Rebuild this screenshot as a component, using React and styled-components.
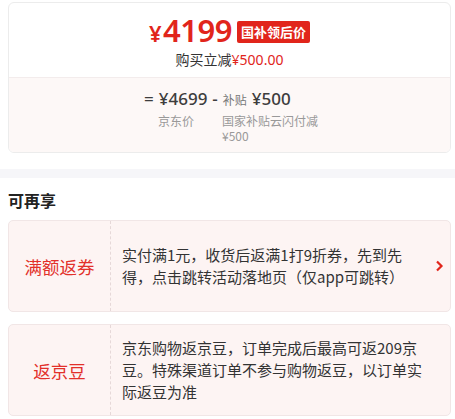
import React from "react";
import styled, { createGlobalStyle } from "styled-components";

const GlobalStyle = createGlobalStyle`
  body {
    margin: 0;
    background: #fff;
    font-family: "Noto Sans CJK SC", "Noto Sans", sans-serif;
    color: #333;
  }
`;

const Page = styled.div`
  padding: 2px 4px 0 8px;
`;

const PriceCard = styled.div`
  border: 1px solid #ececec;
  border-radius: 6px;
  overflow: hidden;
`;

const PriceTop = styled.div`
  display: flex;
  flex-direction: column;
  align-items: center;
  padding: 10px 0 7px;
  border-bottom: 1px solid #f3ecec;
`;

const PriceRow = styled.div`
  display: flex;
  align-items: center;
  gap: 5px;
  height: 36px;
  color: #e1251b;
`;

const BigPrice = styled.span`
  font-family: "Noto Sans", sans-serif;
  font-size: 31px;
  font-weight: 600;
  letter-spacing: -0.5px;
  line-height: 36px;
  span {
    font-size: 22px;
    margin-right: 2px;
  }
`;

const Badge = styled.span`
  background: #e1251b;
  color: #fff;
  font-size: 13px;
  font-weight: 700;
  padding: 1px 4px;
  border-radius: 2px;
  line-height: 20px;
  margin-top: 2px;
`;

const Reduce = styled.div`
  font-size: 14px;
  color: #333;
  line-height: 20px;
  em {
    font-style: normal;
    color: #e1251b;
    font-family: "Noto Sans", sans-serif;
  }
`;

const PriceBottom = styled.div`
  background: #fdf8f7;
  display: grid;
  grid-template-columns: 64px 104px;
  padding: 9px 0 9px 149px;
`;

const Formula = styled.div`
  grid-column: 1 / 3;
  display: flex;
  align-items: baseline;
  gap: 5px;
  font-family: "Noto Sans", sans-serif;
  font-size: 17px;
  font-weight: 500;
  color: #3d3d3d;
  line-height: 24px;
  margin-left: -14px;
  white-space: nowrap;
  small {
    font-family: "Noto Sans CJK SC", sans-serif;
    font-size: 12px;
    font-weight: 400;
    color: #777;
  }
`;

const Label = styled.div`
  font-size: 12px;
  color: #999;
  line-height: 15px;
  margin-top: 1px;
`;

const Divider = styled.div`
  height: 9px;
  background: #f6f6f9;
  margin: 16px -4px 0 -8px;
`;

const Title = styled.div`
  font-size: 16px;
  font-weight: 700;
  color: #222;
  padding: 10px 0 8px;
  line-height: 24px;
`;

const Benefit = styled.div`
  display: flex;
  min-height: 90px;
  border: 1px solid #f1e6e6;
  border-radius: 5px;
  background: #fdf4f3;
  margin-bottom: 12px;
`;

const BenefitName = styled.div`
  width: 101px;
  flex-shrink: 0;
  display: flex;
  align-items: center;
  justify-content: center;
  font-size: 17.5px;
  color: #e2302a;
  border-right: 1px dashed #e6d8d8;
`;

const BenefitText = styled.div`
  flex: 1;
  display: flex;
  align-items: center;
  padding: 0 6px 0 11px;
  font-size: 15px;
  line-height: 22px;
  color: #333;
`;

const Arrow = styled.div`
  width: 22px;
  flex-shrink: 0;
  display: flex;
  align-items: center;
  justify-content: center;
  color: #e1251b;
`;

export default function App() {
  return (
    <Page>
      <GlobalStyle />
      <PriceCard>
        <PriceTop>
          <PriceRow>
            <BigPrice>
              <span>¥</span>4199
            </BigPrice>
            <Badge>国补领后价</Badge>
          </PriceRow>
          <Reduce>
            购买立减<em>¥500.00</em>
          </Reduce>
        </PriceTop>
        <PriceBottom>
          <Formula>
            <span>=</span>
            <span>¥4699</span>
            <span>-</span>
            <small>补贴</small>
            <span>¥500</span>
          </Formula>
          <Label>京东价</Label>
          <Label>国家补贴云闪付减¥500</Label>
        </PriceBottom>
      </PriceCard>
      <Divider />
      <Title>可再享</Title>
      <Benefit>
        <BenefitName>满额返券</BenefitName>
        <BenefitText>
          实付满1元，收货后返满1打9折券，先到先得，点击跳转活动落地页（仅app可跳转）
        </BenefitText>
        <Arrow>
          <svg width="9" height="12" viewBox="0 0 9 12">
            <path d="M2 1.5 L6.5 6 L2 10.5" fill="none" stroke="currentColor" strokeWidth="2.2" />
          </svg>
        </Arrow>
      </Benefit>
      <Benefit>
        <BenefitName>返京豆</BenefitName>
        <BenefitText>
          京东购物返京豆，订单完成后最高可返209京豆。特殊渠道订单不参与购物返豆，以订单实际返豆为准
        </BenefitText>
        <Arrow />
      </Benefit>
    </Page>
  );
}
